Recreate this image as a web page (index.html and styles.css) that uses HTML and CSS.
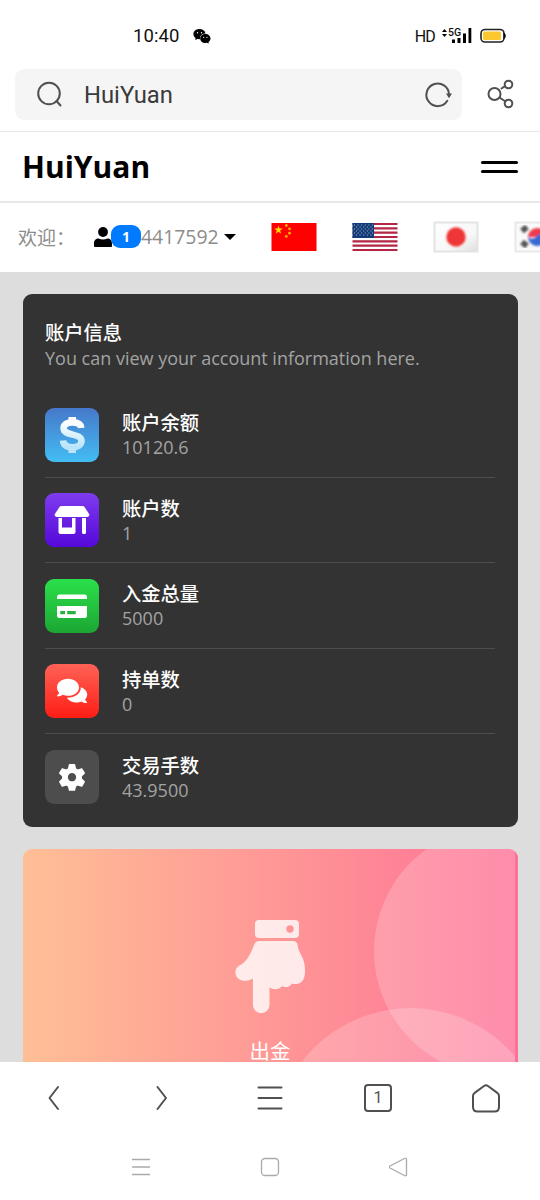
FILE: index.html
```
<!DOCTYPE html>
<html lang="zh-CN">
<head>
<meta charset="utf-8">
<title>HuiYuan</title>
<link rel="stylesheet" href="styles.css">
</head>
<body>
<div class="phone">
  <div class="status">
    <span class="clock">10:40</span>
    <svg class="chat" width="18" height="15" viewBox="0 0 18 15"><path d="M6.500 0C2.900 0 .4 2.200.4 5c0 1.700.9 3 2.200 3.900L2.200 11l2.200-1.100 2.600.3C6.700 6.500 9 4.400 12.600 4.400 12 1.800 9.600 0 6.500 0Z"/><path d="M12.300 5c-3 0-5.100 2-5.100 4.500S9.400 14 12.300 14l1.600-.2 1.900 1-.4-1.700c1.300-.8 2.100-2 2.100-3.600C17.500 7 15.200 5 12.300 5Z"/><g fill="#fff"><circle cx="4.500" cy="3.800" r=".7"/><circle cx="8.500" cy="3.800" r=".7"/><circle cx="10.700" cy="8.300" r=".6"/><circle cx="14" cy="8.300" r=".6"/></g></svg>
    <span class="hd">HD</span>
    <svg class="arrows" width="5" height="8" viewBox="0 0 5 8"><path d="M0 3 2.500 0 5 3ZM0 5l2.500 3L5 5Z"/></svg>
    <div class="signal"><span class="gen">5G</span><svg width="20" height="16" viewBox="0 0 20 16"><path d="M0 11.500h3V15H0zM5.500 10h3v5h-3zM11 5.500h3V15h-3zM16.500 0h2.800v15h-2.800z"/></svg></div>
    <svg class="battery" width="27" height="16" viewBox="0 0 27 16"><rect x="1" y="1.500" width="23" height="12.500" rx="4" fill="#fff" stroke="#222" stroke-width="1.600"/><rect x="3" y="3.500" width="18" height="8.500" rx="1.500" fill="#fdc82f"/><path d="M24 5c1.700.5 1.700 5 0 5.500Z" stroke="#111"/></svg>
  </div>
  <div class="search-row">
    <div class="search">
      <svg width="28" height="28" viewBox="0 0 28 28" class="line"><circle cx="13" cy="12.500" r="10.800"/><path d="m20.500 20 4 4.500"/></svg>
      <span class="query">HuiYuan</span>
      <svg width="28" height="28" viewBox="0 0 28 28" class="line"><path d="M23.300 19.800A11.300 11.300 0 1 1 25 13.500"/><path d="M22 12.500h6L25 17.200Z" fill="#505050" stroke="none"/></svg>
    </div>
    <svg class="line share" width="28" height="30" viewBox="0 0 28 30"><circle cx="7.500" cy="15" r="6"/><circle cx="21.500" cy="5.500" r="3.800"/><circle cx="21.500" cy="24.500" r="3.800"/><path d="m14.500 9.500 3.300-2.300M12.500 18.500l6 4"/></svg>
  </div>
  <header class="header">
    <h1 class="brand">HuiYuan</h1>
    <div class="burger"><i></i><i></i></div>
  </header>
  <div class="userbar">
    <span class="welcome">欢迎：</span>
    <svg class="person" width="18" height="20" viewBox="0 0 18 20"><circle cx="9" cy="5" r="4.900"/><path d="M0 19v-2.500C0 13 2 11.500 4.500 11.500Q9 13.500 13.500 11.500C16 11.500 18 13 18 16.500V19q0 1-1 1H1q-1 0-1-1Z"/></svg>
    <span class="badge">1</span>
    <span class="uid">4417592</span>
    <svg class="caret" width="12" height="6" viewBox="0 0 12 6"><path d="M0 0h12L6 6Z"/></svg>
    <div class="flags">
      <svg width="46" height="30" viewBox="0 0 46 30"><path fill="#fe0000" d="M.5 1h45v28H.5z"/><path fill="#ffde00" d="m7.500 3.500 1 3.100h3.300L9.100 8.500l1 3.200-2.600-2-2.700 2 1-3.200-2.600-1.900h3.300Z"/><g fill="#ffb000"><circle cx="15.300" cy="3.500" r="1.400"/><circle cx="18.500" cy="6.800" r="1.400"/><circle cx="18.500" cy="11.200" r="1.400"/><circle cx="15.300" cy="14.400" r="1.400"/></g></svg>
      <svg width="46" height="30" viewBox="0 0 46 30"><path fill="#fff" d="M.5 1h45v28H.5z"/><path stroke="#b32645" stroke-width="2.200" d="M.5 2h45M.5 6.300h45M.5 10.700h45M.5 15h45M.5 19.300h45M.5 23.700h45M.5 28h45"/><path fill="#123b78" d="M.5 1H22v15H.5z"/><path stroke="#a9b8d0" stroke-width="1" stroke-dasharray="1 2.600" d="M2 3h19M4 5h17M2 7h19M4 9h17M2 11h19M4 13h17"/></svg>
      <svg width="46" height="32" viewBox="0 0 46 32"><defs><linearGradient id="jp" x1="0" x2="1" y1="0" y2="1"><stop stop-color="#fff"/><stop offset=".65" stop-color="#f7f7f7"/><stop offset="1" stop-color="#dcdcdc"/></linearGradient><filter id="soft"><feGaussianBlur stdDeviation="1"/></filter></defs><rect x="1.500" y="1.500" width="43" height="29" fill="url(#jp)" stroke="#e4e4e4" stroke-width="2"/><circle cx="23" cy="16" r="9.700" fill="#ef3535" filter="url(#soft)"/></svg>
      <svg width="46" height="32" viewBox="0 0 46 32"><rect x="1.500" y="1.500" width="43" height="29" fill="#fafafa" stroke="#e8e8e8" stroke-width="2"/><g filter="url(#soft)"><path fill="#ef3b48" d="M14 16a8 8 0 0 1 18 0Z"/><path fill="#3769d2" d="M14 16q5 4 9-1t9 1a9 9 0 0 1-18 0Z"/><path stroke="#555" stroke-width="6" d="m8 10 5-4M8 21l5 4"/></g></svg>
    </div>
  </div>
  <main class="content">
    <section class="account">
      <h2 class="title">账户信息</h2>
      <p class="sub">You can view your account information here.</p>
      <div class="list">
        <div class="item"><svg class="ico blue" viewBox="0 0 54 54"><defs><linearGradient id="dol" x1="0" x2="0" y1="0" y2="1"><stop stop-color="#fff"/><stop offset="1" stop-color="#b9e4fa"/></linearGradient></defs><path fill="none" stroke="url(#dol)" stroke-width="6.600" d="M36.300 20C35.800 15.500 32 14.400 27.500 14.400c-5.300 0-8.900 1.900-8.900 5.900 0 8.500 17.900 4.100 17.900 12.700 0 4.300-4 6.200-9 6.200-5.400 0-9-2-9.400-6.800"/><path fill="#fff" d="M23.500 9h7.500v4h-7.500z"/><path fill="#bce5fa" d="M23.500 41h7.500v4h-7.500z"/></svg><div><h3 class="name">账户余额</h3><p class="value">10120.6</p></div></div>
        <div class="item"><svg class="ico purple" viewBox="0 0 54 54"><g fill="#fff"><path d="M16.500 13h21q1.300 0 2 1l4.300 6.500c1.200 2 .2 3.500-1.800 3.500H12c-2 0-3-1.500-1.800-3.500L14.500 14q.7-1 2-1Z"/><path d="M13.500 25h3.500v9.500h10V25h3.500v14q0 2-2 2h-13q-2 0-2-2ZM37 25h4v14.500q0 1.500-1.500 1.500h-1Q37 41 37 39.500Z"/></g></svg><div><h3 class="name">账户数</h3><p class="value">1</p></div></div>
        <div class="item"><svg class="ico green" viewBox="0 0 54 54"><path fill="#fff" d="M12 20v-2q0-2.500 2.500-2.500h25Q42 15.500 42 18v2ZM12 27h30v9.500q0 2.500-2.500 2.500h-25Q12 39 12 36.500Z"/><path fill="#25b33b" d="M15.300 32h4.700v3.200h-4.700zM22.200 32h8.500v3.200h-8.500z"/></svg><div><h3 class="name">入金总量</h3><p class="value">5000</p></div></div>
        <div class="item"><svg class="ico red" viewBox="0 0 54 54"><path fill="#fff" d="M23 14.800c-6.200 0-11 3.900-11 8.800 0 2 .8 3.800 2.100 5.200-.3 1-1.200 2-2 2.800-.3.400 0 .8.400.8 2.200 0 4.100-.9 5.400-1.700 1.500.7 3.300 1.100 5.100 1.100 6.100 0 11-3.800 11-8.400s-4.900-8.600-11-8.600Z"/><path fill="#fff" d="M35.800 23.200c.3 6-5.500 10.500-14 10.600 1.900 3 5.500 4.700 9.500 4.700 1.800 0 3.600-.4 5-1 1.600 1 3.300 1.500 5.300 1.500.5 0 .7-.5.400-.9-.8-.8-1.500-1.700-1.900-2.700 1.300-1.400 2.100-3 2.100-4.900 0-3.200-2.500-6-6.400-7.300Z"/></svg><div><h3 class="name">持单数</h3><p class="value">0</p></div></div>
        <div class="item"><svg class="ico gray" viewBox="0 0 54 54"><path fill="#fff" fill-rule="evenodd" stroke="#fff" stroke-linejoin="round" stroke-width="1.500" d="M24.500 14.800h5l.9 4 2.400 1.400 3.900-1.300 2.500 4.300-3 2.800v2.900l3 2.800-2.500 4.300-3.900-1.300-2.400 1.400-.9 4h-5l-.9-4-2.400-1.400-3.900 1.300-2.500-4.300 3-2.800V26l-3-2.800 2.500-4.300 3.900 1.300 2.400-1.400ZM27 22.300a4.900 4.900 0 1 0 0 9.800 4.900 4.900 0 0 0 0-9.800Z"/></svg><div><h3 class="name">交易手数</h3><p class="value">43.9500</p></div></div>
      </div>
    </section>
    <section class="payout">
      <svg class="circles" width="492.500" height="290" viewBox="0 0 492.500 290"><g fill="#fff" fill-opacity=".2"><circle cx="476" cy="102" r="125"/><circle cx="387.500" cy="296" r="137"/></g></svg>
      <svg class="hand" width="72" height="96" viewBox="0 0 72 96"><path fill="#fff" fill-opacity=".8" fill-rule="evenodd" d="M26 1h36q4 0 4 4v10q0 4-4 4H26q-4 0-4-4V5q0-4 4-4Zm31 5.300a3.700 3.700 0 1 0 0 7.400 3.700 3.700 0 0 0 0-7.400Z"/><path fill="#fff" fill-opacity=".8" d="M26 22h34q4 0 4.500 4c1.500 10 7 11 7.500 24 .5 10-3 15-9 15-3 0-3 0-4-.5-3 4.500-7.500 4-10 2.500-3 4-8.500 4-12.500 1.500V86a8.300 8.300 0 0 1-16.600 0V59.500c-8 5-17.500 1.500-17.500-6 0-4 2.500-6.500 6-8C14 42 18 34 21 26q1.500-4 5-4Z"/></svg>
      <p class="caption">出金</p>
    </section>
  </main>
  <nav class="tools line">
    <svg width="30" height="32" viewBox="0 0 30 32"><path d="M19 5 10.500 16 19 27"/></svg>
    <svg width="30" height="32" viewBox="0 0 30 32"><path d="M10.500 5 19 16l-8.500 11"/></svg>
    <svg width="30" height="32" viewBox="0 0 30 32"><path d="M3.500 5.500h23M3.500 16h23M3.500 26.500h23"/></svg>
    <span class="tabs">1</span>
    <svg width="30" height="32" viewBox="0 0 30 32"><path d="M2 14q0-2 1.700-3.100L13 4q2-1.500 4 0l9.300 6.900Q28 12 28 14v11q0 4.500-4.500 4.500h-17Q2 29.500 2 25Z"/></svg>
  </nav>
  <div class="system">
    <svg width="20" height="20" viewBox="0 0 20 20"><path d="M1 2.500h18M1 10h18M1 17.500h18"/></svg>
    <svg width="20" height="20" viewBox="0 0 20 20"><rect x="1.500" y="1.500" width="17" height="17" rx="3.500"/></svg>
    <svg width="20" height="20" viewBox="0 0 20 20"><path d="M17.500 2.500v15q0 2-2 1L1 11q-1.500-1 0-2L15.500 1.500q2-1 2 1Z"/></svg>
  </div>
</div>
</body>
</html>
```
FILE: styles.css
```
* { box-sizing: border-box; }
body, h1, h2, h3, p { margin: 0; }
body { background: #fff; font-family: "Open Sans", "Noto Sans CJK SC", sans-serif; }
svg { display: block; flex: none; }
.phone { width: 540px; height: 1200px; display: flex; flex-direction: column; overflow: hidden; }
.phone > * { flex: none; }

.status { height: 69px; padding: 0 33px 0 133px; display: flex; align-items: center; font-family: Roboto, sans-serif; color: #111; }
.status > * { margin-top: 3px; }
.clock { font-size: 18.500px; letter-spacing: .1px; }
.status .chat { margin-left: 13px; }
.hd { margin-left: auto; font-size: 16px; letter-spacing: -.8px; }
.arrows { margin: -4px 0 0 7px; }
.signal { display: grid; width: 24px; margin-left: 1px; }
.signal > * { grid-area: 1 / 1; }
.signal svg { justify-self: end; }
.gen { font-size: 10.500px; line-height: 9px; font-weight: 500; }
.battery { margin-left: 8px; }

.line { fill: none; stroke: #505050; stroke-width: 2; stroke-linecap: round; stroke-linejoin: round; }
.search-row { height: 63px; padding: 0 0 0 15px; display: flex; align-items: flex-start; border-bottom: 1px solid #e8e8e8; }
.search { flex: none; width: 447px; height: 51px; padding: 0 10px 0 21px; border-radius: 9px; background: #f5f5f5; display: flex; align-items: center; }
.query { flex: 1; margin-left: 20px; font: 23.800px/51px Roboto, sans-serif; color: #3a3a3a; padding-top: 2px; }
.share { margin: 10px 0 0 25px; }

.header { height: 71px; padding: 0 22px 0 22px; display: flex; align-items: center; justify-content: space-between; border-bottom: 2px solid #e8e8e8; }
.brand { font-size: 30px; line-height: 40px; font-weight: 700; color: #000; padding-top: 1px; }
.burger { display: grid; gap: 6px; width: 37px; }
.burger i { height: 3px; border-radius: 2px; background: #000; }

.userbar { height: 69px; padding: 0 0 2px 18px; display: flex; align-items: center; overflow: hidden; color: #8c8c8c; }
.userbar > * { flex: none; }
.welcome { width: 76px; font-size: 19px; }
.badge { width: 30px; height: 23px; border-radius: 9px; background: #007bff; color: #fff; font: 700 14px/23px "Open Sans", sans-serif; text-align: center; margin-left: -1px; }
.uid { width: 78px; font-size: 19.400px; }
.caret { margin-left: 5px; }
.flags { margin-left: 35px; display: flex; align-items: center; gap: 35px; }

.content { height: 790px; padding: 22px 22.500px 0; background: #ddd; overflow: hidden; }
.account { height: 532.500px; padding: 25px 22.500px 0; border-radius: 9px; background: #333; color: #fff; }
.title, .name { font-size: 19.300px; line-height: 27px; font-weight: 500; }
.sub, .value { font-size: 18px; line-height: 24px; color: #a3a3a3; }
.sub { white-space: nowrap; }
.list { padding-top: 22px; }
.item { height: 85.600px; padding-top: 15.700px; display: flex; gap: 23px; border-bottom: 1px solid #4d4d4d; }
.item:last-child { border-bottom: 0; }
.ico { width: 54px; height: 54px; border-radius: 9px; }
.blue { background: linear-gradient(#4678ca, #43bdf4); }
.purple { background: linear-gradient(#7e3bee, #5608d9); }
.green { background: linear-gradient(#2be04b, #1ca633); }
.red { background: linear-gradient(#ff6257, #ff1d15); }
.gray { background: #4d4d4d; }
.item .name { line-height: 26px; margin-top: 2.500px; }
.item .value { line-height: 22px; }

.payout { position: relative; height: 290px; margin-top: 22.500px; padding-top: 70px; border-radius: 9px; overflow: hidden; background: linear-gradient(90deg, #ffbf96, #fe7096); color: #fff; }
.circles { position: absolute; left: 0; top: 0; }
.hand { position: relative; margin: 0 auto; left: -1px; }
.caption { position: relative; margin-top: 26px; text-align: center; font-size: 20.500px; line-height: 20px; }

.tools { height: 72px; display: grid; grid-template-columns: repeat(5, 1fr); place-items: center; background: #fff; }
.tabs { width: 28px; height: 28px; border: 2px solid #505050; border-radius: 4px; color: #505050; font: 16px/24px Roboto, sans-serif; text-align: center; }
.system { flex: 1; padding-top: 23px; display: flex; justify-content: center; gap: 109px; fill: none; stroke: #aaa; stroke-width: 1.300; }
```
